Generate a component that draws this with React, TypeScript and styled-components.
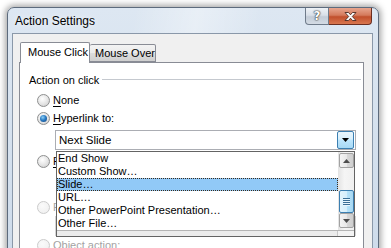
import React from "react";
import styled, { createGlobalStyle } from "styled-components";

const GlobalStyle = createGlobalStyle`
  html, body {
    margin: 0;
    padding: 0;
    background: #ffffff;
  }
  body {
    font-family: "Liberation Sans", Arial, sans-serif;
    font-size: 11px;
    color: #000;
  }
`;

const Desktop = styled.div`
  position: relative;
  width: 391px;
  height: 248px;
  overflow: hidden;
  display: flow-root;
`;

const Window = styled.div`
  box-sizing: border-box;
  margin: 7px 0 0 7px;
  width: 372px;
  height: 300px;
  border: 1px solid #5d6b7d;
  border-radius: 7px 7px 0 0;
  padding: 0 5px 0 4px;
  display: flex;
  flex-direction: column;
  background: linear-gradient(
      100deg,
      rgba(255, 255, 255, 0) 30%,
      rgba(255, 255, 255, 0.35) 45%,
      rgba(255, 255, 255, 0) 60%
    ),
    linear-gradient(180deg, #dde7f2 0%, #cbd9e9 100%);
  box-shadow: 0 0 6px 2px rgba(0, 0, 0, 0.35);
`;

const TitleBar = styled.div`
  height: 25px;
  flex: none;
  display: flex;
  align-items: flex-start;
`;

const Title = styled.div`
  flex: 1;
  align-self: center;
  padding: 1px 0 0 3px;
  font-size: 12px;
  color: #000;
  text-shadow: 0 0 6px rgba(255, 255, 255, 0.9);
`;

const CaptionButtons = styled.div`
  display: flex;
  margin-right: 1px;
`;

const CaptionButton = styled.div<{ $close?: boolean }>`
  box-sizing: border-box;
  width: ${(p) => (p.$close ? "43px" : "24px")};
  height: 17px;
  display: flex;
  align-items: center;
  justify-content: center;
  border: 1px solid ${(p) => (p.$close ? "#6b2e20" : "#6f7b8a")};
  border-top: none;
  border-left: ${(p) => (p.$close ? "none" : "1px solid #6f7b8a")};
  border-radius: ${(p) => (p.$close ? "0 0 4px 0" : "0 0 0 4px")};
  background: ${(p) =>
    p.$close
      ? "linear-gradient(180deg, #e8a68f 0%, #d47a5c 45%, #c14f2c 55%, #d9774f 100%)"
      : "linear-gradient(180deg, #eef2f6 0%, #d9e0e8 45%, #c3ccd7 55%, #d4dbe4 100%)"};
  color: #fff;
  font-family: "DejaVu Sans", sans-serif;
  font-weight: bold;
  font-size: 12px;
  line-height: 1;
  text-shadow: 0 0 1px #333, 0 0 1px #333, 0 0 2px #555;
`;

const Client = styled.div`
  flex: 1;
  border: 1px solid #8a98a9;
  border-bottom: none;
  background: #f0f0f0;
  padding: 8px 0 0 6px;
`;

const TabRow = styled.div`
  display: flex;
  align-items: flex-end;
  height: 20px;
  padding-left: 1px;
  position: relative;
  z-index: 1;
`;

const Tab = styled.div<{ $active?: boolean }>`
  box-sizing: border-box;
  height: ${(p) => (p.$active ? "21px" : "18px")};
  padding: ${(p) => (p.$active ? "3px 0 0 7px" : "2px 0 0 5px")};
  width: ${(p) => (p.$active ? "70px" : "66px")};
  border: 1px solid #898c95;
  border-bottom: ${(p) => (p.$active ? "none" : "1px solid #898c95")};
  border-left: ${(p) => (p.$active ? "1px solid #898c95" : "none")};
  border-radius: 2px 2px 0 0;
  margin-bottom: ${(p) => (p.$active ? "-1px" : "0")};
  background: ${(p) =>
    p.$active
      ? "#ffffff"
      : "linear-gradient(180deg, #f3f3f3 0%, #ebebeb 50%, #dddddd 51%, #cfcfcf 100%)"};
  white-space: nowrap;
`;

const Panel = styled.div`
  box-sizing: border-box;
  width: 345px;
  height: 300px;
  border: 1px solid #898c95;
  background: #ffffff;
  padding: 8px 2px 0 9px;
`;

const SectionHeader = styled.div`
  display: flex;
  align-items: center;
  height: 17px;
`;

const Rule = styled.div`
  flex: 1;
  height: 1px;
  margin-left: 3px;
  background: #c5c9cf;
`;

const Options = styled.div`
  display: flex;
  flex-direction: column;
  padding-top: 3px;
`;

const OptionRow = styled.div<{ $disabled?: boolean }>`
  display: flex;
  align-items: center;
  height: 18px;
  flex: none;
  padding-left: 8px;
  color: ${(p) => (p.$disabled ? "#a3a3a3" : "#000")};
`;

const RadioDot = styled.span<{ $checked?: boolean; $disabled?: boolean }>`
  box-sizing: border-box;
  width: 13px;
  height: 13px;
  border-radius: 50%;
  border: 1px solid ${(p) => (p.$disabled ? "#cbcbcb" : "#8e8f8f")};
  margin-right: 3px;
  display: flex;
  align-items: center;
  justify-content: center;
  background: ${(p) =>
    p.$disabled
      ? "radial-gradient(circle at 40% 35%, #fafafa 0%, #eeeeee 100%)"
      : "radial-gradient(circle at 40% 35%, #ffffff 0%, #e4e4e4 55%, #c8c8c8 100%)"};

  &::after {
    content: "";
    display: ${(p) => (p.$checked ? "block" : "none")};
    width: 7px;
    height: 7px;
    border-radius: 50%;
    background: radial-gradient(circle at 40% 35%, #8fd0f5 0%, #2b7cc4 45%, #0c3f7a 100%);
  }
`;

const Key = styled.span`
  text-decoration: underline;
  text-underline-offset: 2px;
`;

const ComboWrap = styled.div<{ $top?: number }>`
  position: relative;
  margin: ${(p) => p.$top ?? 0}px 0 0 26px;
  width: 301px;
  height: 20px;
  flex: none;
`;

const ComboBox = styled.div<{ $disabled?: boolean }>`
  box-sizing: border-box;
  height: 20px;
  display: flex;
  align-items: center;
  border: 1px solid ${(p) => (p.$disabled ? "#d4d4d4" : "#abadb3")};
  background: #fff;
  padding: 0 1px 0 3px;
`;

const ComboText = styled.div`
  flex: 1;
  font-size: 11.5px;
`;

const DropButton = styled.div`
  box-sizing: border-box;
  width: 17px;
  height: 18px;
  border: 1px solid #3c7fb1;
  border-radius: 2px;
  background: linear-gradient(180deg, #eaf6fd 0%, #d9f0fc 45%, #bee6fd 50%, #a7d9f5 100%);
  display: flex;
  align-items: center;
  justify-content: center;
`;

const DropList = styled.div`
  position: absolute;
  top: 21px;
  left: 1px;
  width: 299px;
  height: 86px;
  box-sizing: border-box;
  border: 1px solid #646464;
  background: #fff;
  display: flex;
  flex-direction: column;
  z-index: 5;
`;

const ListBody = styled.div`
  flex: 1;
  display: flex;
`;

const Items = styled.div`
  flex: 1;
  display: flex;
  flex-direction: column;
`;

const Item = styled.div<{ $selected?: boolean }>`
  box-sizing: border-box;
  height: 13px;
  line-height: 13px;
  padding-left: 1px;
  font-size: 11px;
  white-space: nowrap;
  overflow: hidden;
  background: ${(p) => (p.$selected ? "#91c9f7" : "transparent")};
  outline: ${(p) => (p.$selected ? "1px dotted #3a2a1a" : "none")};
  outline-offset: -1px;
`;

const ScrollBar = styled.div`
  width: 16px;
  display: flex;
  flex-direction: column;
  padding: 1px 0 0 0;
  background: linear-gradient(90deg, #e3e3e3 0%, #f5f5f5 40%, #f0f0f0 100%);
`;

const ScrollButton = styled.div`
  box-sizing: border-box;
  height: 15px;
  width: 15px;
  margin-left: 1px;
  border: 1px solid #a2a2a2;
  border-radius: 2px;
  background: linear-gradient(90deg, #f4f4f4 0%, #e8e8e8 50%, #d9d9d9 51%, #cecece 100%);
  display: flex;
  align-items: center;
  justify-content: center;
`;

const Thumb = styled.div`
  box-sizing: border-box;
  height: 23px;
  width: 15px;
  margin-left: 1px;
  border: 1px solid #3c7fb1;
  border-radius: 2px;
  background: linear-gradient(90deg, #e3f4fc 0%, #d6effc 50%, #b8e4fa 51%, #a6d7f2 100%);
  display: flex;
  flex-direction: column;
  align-items: center;
  justify-content: center;
  gap: 1px;
`;

const GripLine = styled.div`
  width: 7px;
  height: 1px;
  background: #3b6f96;
  box-shadow: 0 1px 0 #e8f6fd;
`;

const ResizeBar = styled.div`
  height: 6px;
  border-top: 1px solid #b5b5b5;
  background: #ececec;
  display: flex;
  justify-content: flex-end;
`;

const ResizeGrip = styled.div`
  width: 16px;
  border-left: 1px solid #c8c8c8;
  background: #f3f3f3;
`;

const Spacer = styled.div<{ $h: number }>`
  height: ${(p) => p.$h}px;
  flex: none;
`;

const Triangle = ({ up, color }: { up?: boolean; color: string }) => (
  <svg width="7" height="4" viewBox="0 0 7 4">
    <path d={up ? "M0 4 L3.5 0 L7 4 Z" : "M0 0 L7 0 L3.5 4 Z"} fill={color} />
  </svg>
);

const CloseGlyph = () => (
  <svg width="15" height="11" viewBox="0 0 15 11">
    <path
      d="M2 1.5 L5.5 1.5 L7.5 3.8 L9.5 1.5 L13 1.5 L9.3 5.5 L13 9.5 L9.5 9.5 L7.5 7.2 L5.5 9.5 L2 9.5 L5.7 5.5 Z"
      fill="#ffffff"
      stroke="#4a2a22"
      strokeWidth="0.9"
      strokeLinejoin="round"
    />
  </svg>
);

const listItems = [
  "End Show",
  "Custom Show…",
  "Slide…",
  "URL…",
  "Other PowerPoint Presentation…",
  "Other File…",
];

export default function App() {
  return (
    <>
      <GlobalStyle />
      <Desktop>
        <Window>
          <TitleBar>
            <Title>Action Settings</Title>
            <CaptionButtons>
              <CaptionButton>?</CaptionButton>
              <CaptionButton $close>
                <CloseGlyph />
              </CaptionButton>
            </CaptionButtons>
          </TitleBar>

          <Client>
            <TabRow>
              <Tab $active>Mouse Click</Tab>
              <Tab>Mouse Over</Tab>
            </TabRow>

            <Panel>
              <SectionHeader>
                Action on click
                <Rule />
              </SectionHeader>

              <Options>
                <OptionRow>
                  <RadioDot />
                  <span>
                    <Key>N</Key>one
                  </span>
                </OptionRow>
                <OptionRow>
                  <RadioDot $checked />
                  <span>
                    <Key>H</Key>yperlink to:
                  </span>
                </OptionRow>

                <ComboWrap $top={3}>
                  <ComboBox>
                    <ComboText>Next Slide</ComboText>
                    <DropButton>
                      <Triangle color="#000" />
                    </DropButton>
                  </ComboBox>

                  <DropList>
                    <ListBody>
                      <Items>
                        {listItems.map((label) => (
                          <Item key={label} $selected={label === "Slide…"}>
                            {label}
                          </Item>
                        ))}
                      </Items>
                      <ScrollBar>
                        <ScrollButton>
                          <Triangle up color="#4d4d4d" />
                        </ScrollButton>
                        <Spacer $h={22} />
                        <Thumb>
                          <GripLine />
                          <GripLine />
                          <GripLine />
                          <GripLine />
                        </Thumb>
                        <ScrollButton>
                          <Triangle color="#4d4d4d" />
                        </ScrollButton>
                      </ScrollBar>
                    </ListBody>
                    <ResizeBar>
                      <ResizeGrip />
                    </ResizeBar>
                  </DropList>
                </ComboWrap>

                <Spacer $h={2} />
                <OptionRow>
                  <RadioDot />
                  <span>
                    <Key>R</Key>un program:
                  </span>
                </OptionRow>
                <Spacer $h={28} />
                <OptionRow $disabled>
                  <RadioDot $disabled />
                  <span>Run macro:</span>
                </OptionRow>
                <ComboWrap>
                  <ComboBox $disabled />
                </ComboWrap>
                <OptionRow $disabled>
                  <RadioDot $disabled />
                  <span>Object action:</span>
                </OptionRow>
              </Options>
            </Panel>
          </Client>
        </Window>
      </Desktop>
    </>
  );
}
